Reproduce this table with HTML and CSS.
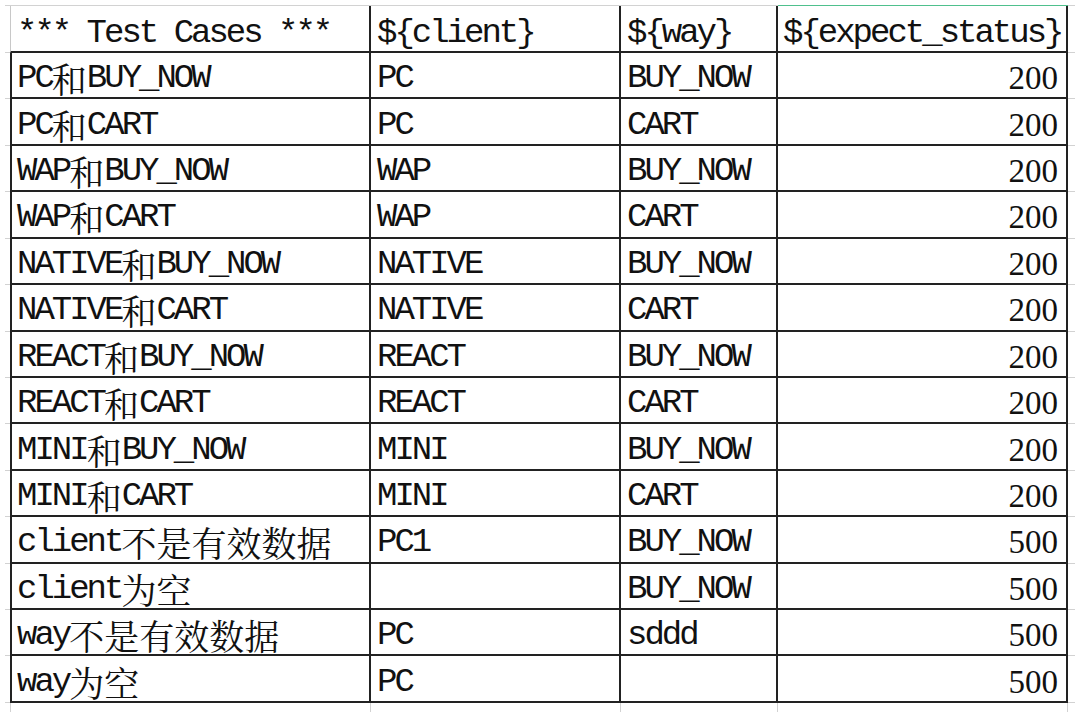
FILE: index.html
```html
<!DOCTYPE html>
<html lang="zh-CN">
<head>
<meta charset="utf-8">
<title>Test Cases</title>
<link rel="stylesheet" href="styles.css">
</head>
<body>
<div class="sheet">
  <div class="row head">
    <div class="stub"></div>
    <div class="cell first">*** Test Cases ***</div>
    <div class="cell">${client}</div>
    <div class="cell">${way}</div>
    <div class="cell hl">${expect_status}</div>
    <div class="stub"></div>
  </div>
  <div class="row"><div class="stub"></div><div class="cell first">PC<span class="zh">和</span>BUY_NOW</div><div class="cell">PC</div><div class="cell">BUY_NOW</div><div class="cell num">200</div><div class="stub"></div></div>
  <div class="row"><div class="stub"></div><div class="cell first">PC<span class="zh">和</span>CART</div><div class="cell">PC</div><div class="cell">CART</div><div class="cell num">200</div><div class="stub"></div></div>
  <div class="row"><div class="stub"></div><div class="cell first">WAP<span class="zh">和</span>BUY_NOW</div><div class="cell">WAP</div><div class="cell">BUY_NOW</div><div class="cell num">200</div><div class="stub"></div></div>
  <div class="row"><div class="stub"></div><div class="cell first">WAP<span class="zh">和</span>CART</div><div class="cell">WAP</div><div class="cell">CART</div><div class="cell num">200</div><div class="stub"></div></div>
  <div class="row"><div class="stub"></div><div class="cell first">NATIVE<span class="zh">和</span>BUY_NOW</div><div class="cell">NATIVE</div><div class="cell">BUY_NOW</div><div class="cell num">200</div><div class="stub"></div></div>
  <div class="row"><div class="stub"></div><div class="cell first">NATIVE<span class="zh">和</span>CART</div><div class="cell">NATIVE</div><div class="cell">CART</div><div class="cell num">200</div><div class="stub"></div></div>
  <div class="row"><div class="stub"></div><div class="cell first">REACT<span class="zh">和</span>BUY_NOW</div><div class="cell">REACT</div><div class="cell">BUY_NOW</div><div class="cell num">200</div><div class="stub"></div></div>
  <div class="row"><div class="stub"></div><div class="cell first">REACT<span class="zh">和</span>CART</div><div class="cell">REACT</div><div class="cell">CART</div><div class="cell num">200</div><div class="stub"></div></div>
  <div class="row"><div class="stub"></div><div class="cell first">MINI<span class="zh">和</span>BUY_NOW</div><div class="cell">MINI</div><div class="cell">BUY_NOW</div><div class="cell num">200</div><div class="stub"></div></div>
  <div class="row"><div class="stub"></div><div class="cell first">MINI<span class="zh">和</span>CART</div><div class="cell">MINI</div><div class="cell">CART</div><div class="cell num">200</div><div class="stub"></div></div>
  <div class="row"><div class="stub"></div><div class="cell first">client<span class="zh">不是有效数据</span></div><div class="cell">PC1</div><div class="cell">BUY_NOW</div><div class="cell num">500</div><div class="stub"></div></div>
  <div class="row"><div class="stub"></div><div class="cell first">client<span class="zh">为空</span></div><div class="cell"></div><div class="cell">BUY_NOW</div><div class="cell num">500</div><div class="stub"></div></div>
  <div class="row"><div class="stub"></div><div class="cell first">way<span class="zh">不是有效数据</span></div><div class="cell">PC</div><div class="cell">sddd</div><div class="cell num">500</div><div class="stub"></div></div>
  <div class="row"><div class="stub"></div><div class="cell first">way<span class="zh">为空</span></div><div class="cell">PC</div><div class="cell"></div><div class="cell num">500</div><div class="stub"></div></div>
  <div class="row tail">
    <div class="end"></div>
    <div class="end end-first"></div>
    <div class="end"></div>
    <div class="end"></div>
    <div class="end"></div>
    <div class="end"></div>
  </div>
</div>
</body>
</html>
```
FILE: styles.css
```css
html, body {
  margin: 0;
  padding: 0;
  background: #ffffff;
}

body {
  font-family: "Liberation Mono", "Noto Sans CJK SC", monospace;
  color: #111111;
}

.sheet {
  margin: 5px 0 0 5px;
  width: 1070px;
  border-top: 1px solid #d2d2d2;
}

.row {
  display: grid;
  grid-template-columns: 5px 361px 250px 157px 290px 7px;
  height: 46.43px;
}

.row.head {
  height: 47px;
}

.row.tail {
  height: 9px;
}

.stub {
  box-sizing: border-box;
  border-bottom: 1px solid #d2d2d2;
}

.cell {
  box-sizing: border-box;
  border-right: 2px solid #222222;
  border-bottom: 2px solid #222222;
  display: flex;
  align-items: center;
  padding: 6px 8px 0 6px;
  font-size: 34px;
  line-height: 34px;
  letter-spacing: -3px;
  white-space: nowrap;
  min-width: 0;
}

.head .cell {
  padding-top: 9px;
}

.cell.first {
  border-left: 2px solid #222222;
  padding-left: 5px;
}

.head .cell.first {
  border-left: 1px solid #c8c8c8;
  padding-left: 6px;
}

.head .cell.hl {
  box-shadow: 0 -1px 0 #4fc08d;
  padding-left: 5px;
}

.cell.num {
  justify-content: flex-end;
  font-family: "Liberation Serif", serif;
  font-size: 33px;
  letter-spacing: 0;
  padding-right: 8px;
}

.zh {
  font-family: "Noto Serif CJK SC", "Noto Sans CJK SC", serif;
  font-size: 35px;
  letter-spacing: 0;
  vertical-align: -3px;
}

.end {
  box-sizing: border-box;
  border-right: 1px solid #d2d2d2;
}

.end:first-child,
.end:last-child {
  border-right: none;
}

.end.end-first {
  border-left: 1px solid #d2d2d2;
}
```
